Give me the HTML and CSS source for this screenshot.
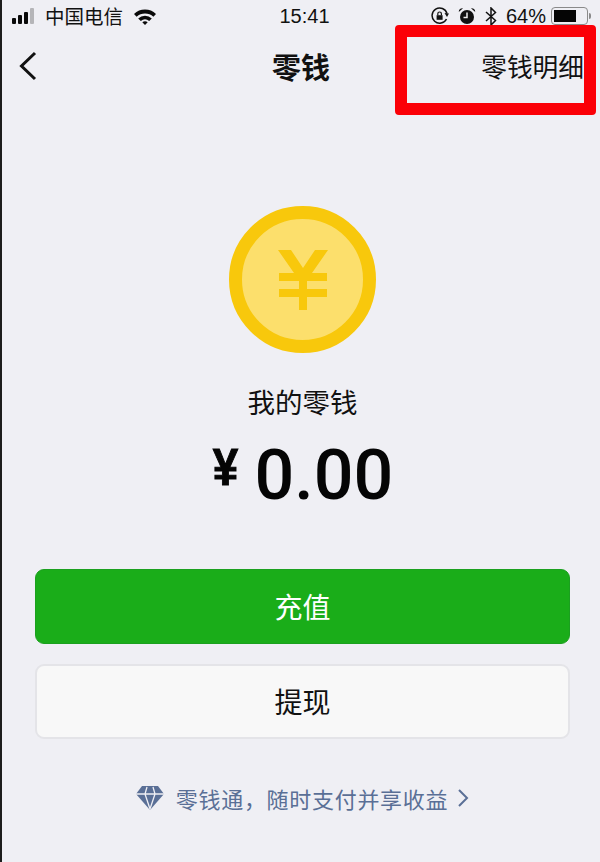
FILE: index.html
```html
<!DOCTYPE html>
<html lang="zh-CN">
  <head>
    <meta charset="UTF-8" />
    <meta name="viewport" content="width=device-width, initial-scale=1.0" />
    <title>零钱</title>
    <link rel="stylesheet" href="styles.css">
  </head>
  <body>
    <div class="phone">
      <div class="status-bar">
        <div class="status-left">
          <span class="signal">
            <i class="bar bar-1"></i><i class="bar bar-2"></i><i class="bar bar-3"></i><i class="bar bar-4"></i>
          </span>
          <span class="carrier">中国电信</span>
          <svg class="wifi" width="24" height="17" viewBox="0 0 24 17">
            <path d="M1 6 A16 16 0 0 1 23 6 L20.4 8.800 A12.400 12.400 0 0 0 3.600 8.800 Z" fill="#0a0a0a"/>
            <path d="M5.200 10.400 A10.200 10.200 0 0 1 18.800 10.400 L16.200 13 A6.600 6.600 0 0 0 7.800 13 Z" fill="#0a0a0a"/>
            <path d="M9.300 14.300 A4.200 4.200 0 0 1 14.700 14.300 L12 17 Z" fill="#0a0a0a"/>
          </svg>
        </div>
        <div class="time">15:41</div>
        <div class="status-right">
          <svg width="18" height="18" viewBox="0 0 18 18" fill="none" stroke="#111">
            <path d="M15.500 12 A7.600 7.600 0 1 1 16 6.500" stroke-width="1.500"/>
            <path d="M13.500 6 L18 6.500 L16 10 Z" fill="#111" stroke="none"/>
            <rect x="5.600" y="8.200" width="6" height="4.600" fill="#111" stroke="none"/>
            <path d="M6.800 8.200 V6.800 A1.800 1.800 0 0 1 10.400 6.800 V8.200" stroke-width="1.200"/>
          </svg>
          <svg class="alarm" width="18" height="18" viewBox="0 0 18 18">
            <circle cx="9" cy="10" r="7" fill="#111"/>
            <path d="M0.800 5 A3.600 3.600 0 0 1 5 1.200 Z M17.200 5 A3.600 3.600 0 0 0 13 1.200 Z" fill="#111"/>
            <path d="M9 5.500 V10.500 H5.500" fill="none" stroke="#eee" stroke-width="1.500"/>
          </svg>
          <svg class="bluetooth" width="12" height="19" viewBox="0 0 12 19" fill="none" stroke="#111" stroke-width="1.500">
            <path d="M1 5 L10.500 13.500 L6 18 V1 L10.500 5.500 L1 14"/>
          </svg>
          <span class="battery-text">64%</span>
          <span class="battery"><span class="battery-level"></span></span>
          <span class="battery-tip"></span>
        </div>
      </div>

      <div class="nav-bar">
        <svg class="back" width="20" height="30" viewBox="0 0 20 30" fill="none" stroke="#111" stroke-width="3">
          <path d="M17 2 L3.500 15 L17 28"/>
        </svg>
        <div class="nav-title">零钱</div>
        <div class="nav-link">零钱明细</div>
        <div class="highlight"></div>
      </div>

      <div class="content">
        <div class="coin">
          <svg width="50" height="60" viewBox="0 0 50 60">
            <path d="M0 0 H13 L25 18 L37 0 H50 L34 23 H49 V31 H29 V39 H49 V47 H29 V60 H21 V47 H1 V39 H21 V31 H1 V23 H16 Z" fill="#f8c80c"/>
          </svg>
        </div>
        <div class="balance-label">我的零钱</div>
        <div class="balance">
          <span class="currency">¥</span><span class="amount">0.00</span>
        </div>
        <div class="btn btn-green">充值</div>
        <div class="btn btn-light">提现</div>
        <div class="promo">
          <svg width="28" height="26" viewBox="0 0 28 26">
            <path d="M6 1 H22 L28 9 L14 25 L0 9 Z" fill="#5a6f96"/>
            <path d="M0 9 H28 M9 9 L14 24 L19 9 M9 9 L11 2 M19 9 L17 2" fill="none" stroke="#efeff4" stroke-width="1.300"/>
          </svg>
          <span class="promo-text">零钱通，随时支付并享收益</span>
          <svg width="12" height="20" viewBox="0 0 12 20" fill="none" stroke="#5a6f96" stroke-width="2">
            <path d="M2 2 L10 10 L2 18"/>
          </svg>
        </div>
      </div>
    </div>
  </body>
</html>
```

FILE: styles.css
```css
/* WeChat wallet balance screen */
body {
  margin: 0;
  padding: 0;
  background-color: #efeff4;
  font-family: "Noto Sans CJK SC", "Liberation Sans", sans-serif;
  color: #111;
}

.phone {
  height: 862px;
  box-sizing: border-box;
  border-left: 2px solid #1c1c1c;
  overflow: hidden;
}

/* status bar */
.status-bar {
  display: grid;
  grid-template-columns: 1fr auto 1fr;
  align-items: center;
  height: 32px;
  padding: 0 9px 0 10px;
}

.status-left,
.status-right {
  display: flex;
  align-items: center;
}

.status-right {
  justify-content: flex-end;
}

.signal {
  display: flex;
  align-items: flex-end;
  gap: 2px;
  height: 16px;
  margin-right: 11px;
}

.bar {
  display: block;
  width: 4px;
  border-radius: 1px;
  background-color: #0a0a0a;
}

.bar-1 { height: 6px; }
.bar-2 { height: 9px; }
.bar-3 { height: 12px; }
.bar-4 { height: 16px; background-color: #b5b5b8; }

.carrier {
  font-size: 19.500px;
  line-height: 24px;
}

.wifi {
  margin-left: 10px;
}

.time {
  margin-left: 6px;
  font-family: "Liberation Sans", sans-serif;
  font-size: 20px;
  font-weight: 500;
  line-height: 24px;
}

.alarm {
  margin-left: 9px;
}

.bluetooth {
  margin-left: 9px;
}

.battery-text {
  margin-left: 9px;
  font-family: "Liberation Sans", sans-serif;
  font-size: 20px;
  line-height: 24px;
}

.battery {
  display: block;
  box-sizing: border-box;
  width: 37px;
  height: 18px;
  margin-left: 5px;
  padding: 2px;
  border: 1px solid #8a8a8a;
  border-radius: 4px;
}

.battery-level {
  display: block;
  width: 22px;
  height: 12px;
  background-color: #050505;
}

.battery-tip {
  display: block;
  width: 2px;
  height: 6px;
  margin-left: 1px;
  border-radius: 0 2px 2px 0;
  background-color: #8a8a8a;
}

/* nav bar */
.nav-bar {
  position: relative;
  display: grid;
  grid-template-columns: 1fr auto 1fr;
  align-items: center;
  height: 68px;
  padding: 0 16px 0 16px;
}

.back {
  justify-self: start;
}

.nav-title {
  font-size: 29px;
  font-weight: 700;
  line-height: 36px;
}

.nav-link {
  justify-self: end;
  font-size: 25.700px;
  line-height: 36px;
}

.highlight {
  position: absolute;
  top: -7px;
  right: 4px;
  box-sizing: border-box;
  width: 201px;
  height: 90px;
  border: 12px solid #fb0007;
  border-radius: 4px;
}

/* main content */
.content {
  display: flex;
  flex-direction: column;
  align-items: center;
  padding: 106px 30px 0 33px;
}

.coin {
  display: flex;
  align-items: center;
  justify-content: center;
  box-sizing: border-box;
  width: 147px;
  height: 147px;
  border: 13px solid #f8c80c;
  border-radius: 50%;
  background-color: #fcdf6c;
}

.balance-label {
  margin-top: 30px;
  font-size: 27.500px;
  line-height: 36px;
}

.balance {
  display: flex;
  align-items: center;
  gap: 15px;
  margin-top: 16px;
  height: 80px;
  color: #050505;
}

.currency {
  margin-top: 2px;
  margin-left: -1px;
  font-family: "Liberation Sans", sans-serif;
  font-size: 52px;
  font-weight: 700;
  line-height: 60px;
  -webkit-text-stroke: 1px #050505;
  transform: scaleX(0.88);
  align-self: flex-start;
}

.amount {
  font-family: Roboto, sans-serif;
  font-size: 70px;
  font-weight: 500;
  line-height: 80px;
}

.btn {
  box-sizing: border-box;
  width: 100%;
  height: 75px;
  border-radius: 9px;
  font-size: 28px;
  line-height: 73px;
  text-align: center;
}

.btn-green {
  margin-top: 54px;
  border: 1px solid #1ba01f;
  background-color: #1aad19;
  color: #fff;
}

.btn-light {
  margin-top: 20px;
  border: 2px solid #e4e4e8;
  background-color: #f8f8f8;
  line-height: 71px;
}

.promo {
  display: flex;
  align-items: center;
  margin-top: 41px;
  color: #5a6f96;
}

.promo-text {
  margin: 0 9px 0 12px;
  font-size: 22px;
  line-height: 36px;
  letter-spacing: 0.700px;
}
```
